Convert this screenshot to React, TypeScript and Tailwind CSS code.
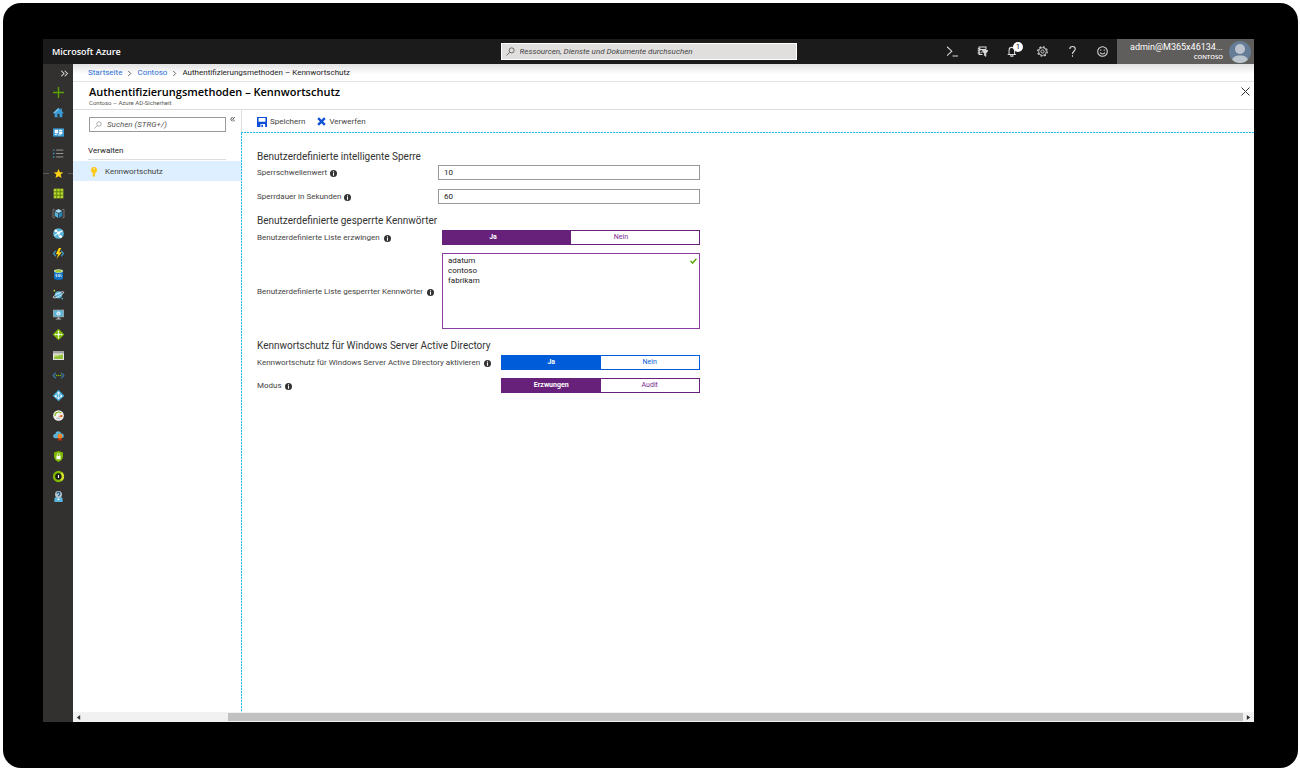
import React, { useState } from "react";

const sideIcons: { name: string; art: React.ReactNode }[][] = [
  [
    { name: "Menü erweitern", art: <path d="M9 4l4 4-4 4M14 4l4 4-4 4" fill="none" stroke="#ddd" strokeWidth="1.500" transform="translate(3 0)" /> },
    { name: "Ressource erstellen", art: <path d="M8 0v16M0 8h16" stroke="#57a300" strokeWidth="2" /> },
    {
      name: "Startseite",
      art: (
        <>
          <path d="M8 1L0 9h2.500v6h11V9H16L13 6V2h-2v2z" fill="#3a9bd6" />
          <path d="M8 1L0 9h2.500L8 4z" fill="#7cc7ee" />
          <path d="M6.500 10h3v5h-3z" fill="#33312f" />
        </>
      ),
    },
    {
      name: "Dashboard",
      art: (
        <>
          <path d="M0 2h16v12H0z" fill="#3999d4" />
          <path d="M2.500 4h5v5h-5zM9 4h4.500v2H9zM9 7h4.500v3H9zM2.500 10h3v1.500h-3zM7 11h5v1H7z" fill="#fff" />
        </>
      ),
    },
  ],
  [
    {
      name: "Alle Dienste",
      art: (
        <>
          <path d="M0 3h2M0 8h2M0 13h2" stroke="#3999c6" strokeWidth="2" />
          <path d="M4.500 3H15M4.500 8H15M4.500 13H15" stroke="#a0a1a2" strokeWidth="1.300" />
        </>
      ),
    },
    { name: "Favoriten", art: <path d="M8 1.500l2 4.500 5 .4-3.800 3.200 1.200 4.900L8 11.900 3.600 14.500l1.200-4.900L1 6.400 6 6z" fill="#fcd116" /> },
    {
      name: "Alle Ressourcen",
      art: (
        <>
          <path d="M1 1h14v14H1z" fill="#b8d432" />
          <path d="M5.500 1v14M10.500 1v14M1 5.500h14M1 10.500h14" stroke="#4d7a05" strokeWidth="1.200" />
        </>
      ),
    },
    {
      name: "Ressourcengruppen",
      art: (
        <>
          <path d="M2.500 2H0v12h2.500M13.500 2H16v12h-2.500" fill="none" stroke="#7a7a7a" strokeWidth="1.400" />
          <path d="M8 1.500l5.500 2.800L8 7.200 2.500 4.300z" fill="#a5dbf5" />
          <path d="M2.500 5.300l5 2.600v6.600l-5-2.800z" fill="#59b4d9" />
          <path d="M13.500 5.300l-5 2.600v6.600l5-2.800z" fill="#2a83b8" />
        </>
      ),
    },
    {
      name: "App Services",
      art: (
        <>
          <circle cx="8" cy="8" r="7.800" fill="#59b4d9" />
          <path d="M3 3l5 4 6-3M8 7l1 5 4 1M8 7L2 11" fill="none" stroke="#fff" strokeWidth="1.500" />
          <circle cx="4" cy="4" r="2" fill="#fff" />
          <circle cx="8.500" cy="7" r="2" fill="#fff" />
          <circle cx="11" cy="12.500" r="2" fill="#fff" />
        </>
      ),
    },
    {
      name: "Funktions-App",
      art: (
        <>
          <path d="M4 4L0.800 8 4 12M12 4l3.200 4L12 12" fill="none" stroke="#3999c6" strokeWidth="1.800" />
          <path d="M8.500 0L4 9h3.500L5 16l8-10H9l3-6z" fill="#fcd116" />
        </>
      ),
    },
  ],
  [
    {
      name: "SQL-Datenbanken",
      art: (
        <>
          <path d="M1.500 3v10c0 1.500 2.900 2.900 6.500 2.900s6.500-1.400 6.500-2.900V3z" fill="#0f72c6" />
          <ellipse cx="8" cy="2.800" rx="6.500" ry="2.600" fill="#e6efc0" />
          <ellipse cx="8" cy="3.100" rx="4.800" ry="1.700" fill="#9fc92c" />
          <path d="M6 8H4v1.500h2V11H4M8 8h1.800v3H8zM11.500 7.500V11h1.500" fill="none" stroke="#fff" strokeWidth="0.900" />
        </>
      ),
    },
    {
      name: "Azure Cosmos DB",
      art: (
        <>
          <circle cx="8" cy="8.500" r="5.300" fill="#59b4d9" />
          <path d="M4 8c2-2 4 0 6-2" stroke="#b7e0f3" fill="none" strokeWidth="1.500" />
          <ellipse cx="8" cy="8.500" rx="8.500" ry="2.300" fill="none" stroke="#d8e4ea" strokeWidth="1.200" transform="rotate(-28 8 8.500)" />
          <circle cx="2" cy="2.500" r="1.300" fill="#b8d432" />
          <circle cx="13.500" cy="14" r="1.100" fill="#59b4d9" />
        </>
      ),
    },
    {
      name: "Virtuelle Computer",
      art: (
        <>
          <path d="M0 1h16v11H0z" fill="#a0a1a2" />
          <path d="M1.200 2.200h13.600v8.600H1.200z" fill="#59b4d9" />
          <path d="M6.500 12h3v2h2.500v1.200H4V14h2.500z" fill="#b9babb" />
          <path d="M8 3.300l3 1.600v3.200l-3 1.600-3-1.600V4.900z" fill="#e5f4fb" />
          <path d="M5 5l3 1.500L11 5M8 6.500v3" stroke="#59b4d9" strokeWidth=".7" fill="none" />
        </>
      ),
    },
    {
      name: "Lastenausgleichsmodule",
      art: (
        <>
          <path d="M8-.5L16.500 8 8 16.500-.5 8z" fill="#7fba00" />
          <path d="M8 3v10M3 8h10" stroke="#fff" strokeWidth="1.100" />
          <path d="M8 2L9.600 4H6.400zM8 14l-1.600-2h3.200zM2 8l2-1.600v3.200zM14 8l-2 1.600V6.400z" fill="#fff" />
          <circle cx="8" cy="8" r="1.800" fill="#fff" />
        </>
      ),
    },
  ],
  [
    {
      name: "Speicherkonten",
      art: (
        <>
          <path d="M0 1.500h16v13H0z" fill="#e7e7e7" />
          <path d="M0 1.500h16V5H0z" fill="#a0a1a2" />
          <path d="M1.500 6.500h13V13h-13z" fill="#c9dc85" />
          <path d="M1.500 10l13-3.500V13h-13z" fill="#92c03c" />
        </>
      ),
    },
    {
      name: "Virtuelle Netzwerke",
      art: (
        <>
          <path d="M4 4L.3 8 4 12M12 4l3.700 4L12 12" fill="none" stroke="#3579a8" strokeWidth="1.800" />
          <circle cx="5" cy="8" r="1.200" fill="#7fba00" />
          <circle cx="8" cy="8" r="1.200" fill="#7fba00" />
          <circle cx="11" cy="8" r="1.200" fill="#7fba00" />
        </>
      ),
    },
    {
      name: "Azure Active Directory",
      art: (
        <>
          <path d="M8-.5l8.500 9L8 16.500-.5 8.500z" fill="#48add9" />
          <path d="M8 4v8M8 4L3.500 9M8 4l4.500 5M3.500 9L8 12l4.500-3" stroke="#d3effa" fill="none" />
          <circle cx="8" cy="4" r="1.500" fill="#fff" />
          <circle cx="4" cy="9" r="1.400" fill="#fff" />
          <circle cx="12" cy="9" r="1.400" fill="#fff" />
          <circle cx="8" cy="12" r="1.500" fill="#fff" />
        </>
      ),
    },
    {
      name: "Überwachen",
      art: (
        <>
          <circle cx="8" cy="8" r="7.800" fill="#f1f1f1" />
          <path d="M3 9a5 5 0 018.500-4.500" fill="none" stroke="#7fba00" strokeWidth="1.600" />
          <path d="M7.500 9l6-2v3.500z" fill="#e8590c" />
          <path d="M5 12h6" stroke="#8a8a8a" />
        </>
      ),
    },
    {
      name: "Advisor",
      art: (
        <>
          <path d="M3 12a3 3 0 01.2-6A4.500 4.500 0 0112 5a3.500 3.500 0 01.500 7z" fill="#59b4d9" />
          <path d="M8 10l-1 6 3-1.500L13 16l-1-6z" fill="#c3340b" />
          <circle cx="10" cy="9" r="3.400" fill="#f58220" />
        </>
      ),
    },
  ],
  [
    {
      name: "Security Center",
      art: (
        <>
          <path d="M8 0l6.500 2v6c0 4-3.500 6.500-6.500 8-3-1.500-6.500-4-6.500-8V2z" fill="#7fba00" />
          <path d="M5 7h6v5H5z" fill="#fff" />
          <path d="M6.200 7V5.500a1.800 1.800 0 013.600 0V7" fill="none" stroke="#fff" />
        </>
      ),
    },
    {
      name: "Kostenverwaltung",
      art: (
        <>
          <circle cx="8" cy="8" r="6.500" fill="#1c1c1c" stroke="#7fba00" strokeWidth="3.400" />
          <path d="M12 2.900A6.500 6.500 0 0111.500 13.500" fill="none" stroke="#d5dd2c" strokeWidth="3.400" />
          <path d="M8 5.800v4.400" stroke="#fff" strokeWidth="1.600" />
        </>
      ),
    },
    {
      name: "Hilfe und Support",
      art: (
        <>
          <path d="M2 16v-4.500c0-2 2-3 6-3s6 1 6 3V16z" fill="#59b4d9" />
          <circle cx="8" cy="5" r="5" fill="#b9c4cc" />
          <path d="M6 4a2 2 0 113.300 1.400C8.500 6 8 6.500 8 7.500" fill="none" stroke="#1d5f8f" strokeWidth="1.800" />
          <path d="M8 10l-2 3h4z" fill="#fff" />
        </>
      ),
    },
  ],
];

function Magnifier({ className }: { className: string }) {
  return (
    <svg viewBox="0 0 16 16" className={className} fill="none" stroke="currentColor" strokeWidth="1.300">
      <circle cx="10" cy="6" r="4.500" />
      <path d="M6.500 9.500L1 15" />
    </svg>
  );
}

function Info() {
  return (
    <svg viewBox="0 0 16 16" className="mt-px size-[7px] shrink-0">
      <circle cx="8" cy="8" r="8" fill="#333" />
      <path d="M8 3v2.500M8 7v6" stroke="#fff" strokeWidth="2.400" />
    </svg>
  );
}

const topIcons = [
  { name: "Cloud Shell", art: <path d="M0 1l7 6.500L0 14M8 14.500h8" strokeWidth="1.500" /> },
  {
    name: "Verzeichnis und Abonnement",
    art: (
      <>
        <path d="M13 5V1.500H3v11h5M1 4h4M1 7h4M1 10h4M3 5h10M6 9h2" strokeWidth="1.500" />
        <path d="M7.500 6.500H16l-3.200 4V15l-2-1.500v-3z" fill="#ddd" />
      </>
    ),
  },
  { name: "Benachrichtigungen", art: <path d="M1 12.500h12M3 12.500V6a4 4 0 018 0v6.500M5.500 13v2h3v-2" strokeWidth="1.500" />, badge: "1" },
  {
    name: "Einstellungen",
    art: (
      <>
        <circle cx="8" cy="8" r="2.300" />
        <circle cx="8" cy="8" r="5.700" />
        <circle cx="8" cy="8" r="7" strokeWidth="1.600" strokeDasharray="2.750 2.750" />
      </>
    ),
  },
  { name: "Hilfe", art: <path d="M4 4.500C4 2 5.800.8 8 .8s4 1.300 4 3.500C12 7.500 8 7.800 8 11.500M8 13.500v2" strokeWidth="1.600" /> },
  {
    name: "Feedback",
    art: (
      <>
        <circle cx="8" cy="8" r="7" strokeWidth="1.500" />
        <path d="M4.500 9.500c1.500 3 5.500 3 7 0M5.500 5v2M10.500 5v2" strokeWidth="1.500" />
      </>
    ),
  },
];

type ToggleProps = {
  label: string;
  options: string[];
  tone?: "purple" | "blue";
  className: string;
  optionClassName?: string;
};

function Toggle({ label, options, tone = "purple", className, optionClassName = "" }: ToggleProps) {
  const [selected, setSelected] = useState(0);
  const frame = tone === "blue" ? "border-[#015cda]" : "border-[#68217a]";
  const on = tone === "blue" ? "bg-[#015cda] text-white font-bold" : "bg-[#68217a] text-white font-bold";
  const off = tone === "blue" ? "bg-white text-[#015cda]" : "bg-white text-[#7b2c8f]";
  return (
    <div role="group" aria-label={label} className={`grid h-[15px] shrink-0 grid-cols-2 border ${frame} ${className}`}>
      {options.map((option, i) => (
        <button
          key={option}
          type="button"
          aria-pressed={selected === i}
          onClick={() => setSelected(i)}
          className={`text-[7px] leading-[13px] ${optionClassName} ${selected === i ? on : off}`}
        >
          {option}
        </button>
      ))}
    </div>
  );
}

function Heading({ children }: { children: React.ReactNode }) {
  return <h2 className="text-[10px] leading-4 text-[#333]">{children}</h2>;
}

function Header() {
  return (
    <header className="grid h-[25px] grid-cols-[1fr_auto_1fr] items-center bg-[#1b1b1b] text-white">
      <span className="pl-[9px] font-['Open_Sans',sans-serif] text-[9px] font-semibold">Microsoft Azure</span>
      <label className="flex h-[17px] w-[296px] items-center gap-[5px] border border-white bg-[#e0dfde] px-1 text-[#444]">
        <Magnifier className="size-[9px]" />
        <input
          type="search"
          aria-label="Ressourcen durchsuchen"
          placeholder="Ressourcen, Dienste und Dokumente durchsuchen"
          className="min-w-0 flex-1 bg-transparent text-[8px] italic outline-none placeholder:text-[#444]"
        />
      </label>
      <div className="flex h-full items-center justify-end">
        {topIcons.map((icon) => (
          <button key={icon.name} type="button" aria-label={icon.name} className="relative flex h-full w-[30px] items-center justify-center">
            <svg viewBox="0 0 16 16" className="size-[11px]" fill="none" stroke="#ddd" strokeWidth="1.300">
              {icon.art}
            </svg>
            {icon.badge && (
              <span className="absolute top-[3px] right-1 flex size-[10px] items-center justify-center rounded-full bg-white text-[7px] leading-none text-black">
                {icon.badge}
              </span>
            )}
          </button>
        ))}
        <button type="button" className="flex h-full w-[137px] items-center justify-end gap-[6px] bg-[#605e5c] pr-[3px]">
          <span className="flex flex-col pt-px text-right">
            <span className="text-[9px] leading-[10px]">admin@M365x46134...</span>
            <span className="font-['Open_Sans',sans-serif] text-[6px] leading-[10px] font-semibold">CONTOSO</span>
          </span>
          <svg viewBox="0 0 22 22" className="size-[22px]">
            <clipPath id="avatar">
              <circle cx="11" cy="11" r="11" />
            </clipPath>
            <g clipPath="url(#avatar)">
              <path d="M0 0h22v22H0z" fill="#647c95" />
              <circle cx="11" cy="8" r="5" fill="#bcc5ce" />
              <path d="M2.500 22c0-6 4-7.500 8.500-7.500s8.500 1.500 8.500 7.500z" fill="#bcc5ce" />
            </g>
          </svg>
        </button>
      </div>
    </header>
  );
}

function Sidebar() {
  return (
    <nav aria-label="Favoriten" className="flex w-[30px] shrink-0 flex-col gap-px bg-[#33312f]">
      {sideIcons.map((group, g) => (
        <div key={g} className="flex flex-col">
          {group.map((icon, i) => (
            <button
              key={icon.name}
              type="button"
              aria-label={icon.name}
              className={`flex w-full items-center justify-center ${g === 0 && i === 0 ? "h-[18px]" : "h-5"}`}
            >
              {icon.name === "Favoriten" && <span className="h-px flex-1 bg-[#5c5a58]" />}
              <svg viewBox="0 0 16 16" className="mx-1 size-[11px] overflow-visible">
                {icon.art}
              </svg>
              {icon.name === "Favoriten" && <span className="h-px flex-1 bg-[#5c5a58]" />}
            </button>
          ))}
        </div>
      ))}
    </nav>
  );
}

function SideMenu() {
  return (
    <aside className="w-[168px] shrink-0">
      <div className="flex items-start gap-1 pt-[7px] pl-4">
        <label className="flex h-[15px] w-[137px] items-center gap-[5px] border border-[#999] px-1 text-[#555]">
          <Magnifier className="size-2 opacity-70" />
          <input
            type="search"
            aria-label="Suchen"
            placeholder="Suchen (STRG+/)"
            className="min-w-0 flex-1 bg-transparent text-[8px] italic outline-none placeholder:text-[#555]"
          />
        </label>
        <button type="button" aria-label="Menü einklappen">
          <svg viewBox="0 0 8 8" className="size-[5px]" fill="none" stroke="#333" strokeWidth="1.400">
            <path d="M4 0L1 3.500 4 7M7.500 0l-3 3.500 3 3.500" />
          </svg>
        </button>
      </div>
      <h2 className="mt-[11px] mr-[15px] mb-px ml-[15px] border-b border-[#ddd] text-[8px] leading-4 text-[#222]">Verwalten</h2>
      <a href="#kennwortschutz" className="flex h-5 items-center gap-[7px] bg-[#def0ff] pt-px pl-[17px] text-[8px] text-[#444]">
        <svg viewBox="0 0 16 20" className="h-[10px] w-2" fill="#fcc812">
          <path d="M8 0a6 6 0 00-2.500 11.500V18L8 20l2.500-2.500-1.500-2 1.500-1.500v-2.500A6 6 0 008 0zm0 2.200a1.500 1.500 0 110 3 1.500 1.500 0 010-3z" fillRule="evenodd" />
        </svg>
        Kennwortschutz
      </a>
    </aside>
  );
}

function SettingsForm() {
  return (
    <form className="flex max-w-[458px] flex-col pt-4 pl-[15px] text-[8px] whitespace-nowrap text-[#444]">
      <Heading>Benutzerdefinierte intelligente Sperre</Heading>
      <div className="flex h-[15px] items-center justify-between">
        <label htmlFor="threshold" className="flex items-center gap-[3px] pt-px">
          Sperrschwellenwert <Info />
        </label>
        <input id="threshold" defaultValue="10" className="h-[15px] w-[262px] border border-[#999] px-[5px] text-[8px] text-[#222]" />
      </div>
      <div className="mt-[9px] flex h-[15px] items-center justify-between">
        <label htmlFor="duration" className="flex items-center gap-[3px] pt-px">
          Sperrdauer in Sekunden <Info />
        </label>
        <input id="duration" defaultValue="60" className="h-[15px] w-[262px] border border-[#999] px-[5px] text-[8px] text-[#222]" />
      </div>

      <div className="mt-[9px]">
        <Heading>Benutzerdefinierte gesperrte Kennwörter</Heading>
      </div>
      <div className="flex h-4 items-center justify-between">
        <span className="flex items-center gap-1 pt-px">
          Benutzerdefinierte Liste erzwingen <Info />
        </span>
        <Toggle label="Benutzerdefinierte Liste erzwingen" options={["Ja", "Nein"]} className="w-[258px]" optionClassName="pr-7" />
      </div>
      <div className="mt-2 flex items-center justify-between">
        <label htmlFor="banned" className="flex items-center gap-1 pt-px">
          Benutzerdefinierte Liste gesperrter Kennwörter <Info />
        </label>
        <div className="relative flex">
          <textarea
            id="banned"
            defaultValue={"adatum\ncontoso\nfabrikam"}
            className="h-[76px] w-[258px] resize-none border border-[#8b3fa0] px-[5px] py-0.5 text-[8px] leading-[10px] text-[#222] outline-none"
          />
          <svg viewBox="0 0 12 10" className="absolute top-[5px] right-[3px] h-[6px] w-[7px]" fill="none" stroke="#57a300" strokeWidth="2.400">
            <path d="M1 5l3.500 3.500L11 1" />
          </svg>
        </div>
      </div>

      <div className="mt-[9px]">
        <Heading>Kennwortschutz für Windows Server Active Directory</Heading>
      </div>
      <div className="flex h-4 items-center justify-between">
        <span className="flex items-center gap-1 pt-px">
          Kennwortschutz für Windows Server Active Directory aktivieren <Info />
        </span>
        <Toggle label="Kennwortschutz aktivieren" options={["Ja", "Nein"]} tone="blue" className="w-[199px]" />
      </div>
      <div className="mt-[7px] flex h-4 items-center justify-between">
        <span className="flex items-center gap-[3px] pt-px">
          Modus <Info />
        </span>
        <Toggle label="Modus" options={["Erzwungen", "Audit"]} className="w-[199px]" />
      </div>
    </form>
  );
}

function Chevron() {
  return (
    <svg viewBox="0 0 8 8" className="size-[5px]" fill="none" stroke="#444" strokeWidth="1.300">
      <path d="M2 0l4 4-4 4" />
    </svg>
  );
}

export default function App() {
  return (
    <div className="flex min-h-screen bg-white py-[3px] pr-0.5 pl-[3px] font-[Roboto,'Open_Sans',sans-serif]">
      <div className="flex flex-1 flex-col rounded-[18px] bg-black pt-9 pr-11 pb-[46px] pl-10">
        <Header />
        <div className="flex flex-1">
          <Sidebar />
          <main className="flex min-w-0 flex-1 flex-col bg-white">
            <nav aria-label="Brotkrümel" className="flex h-[18px] items-center gap-[5px] border-b border-[#e3e3e3] bg-linear-to-b from-[#e2e2e2] to-white to-60% pt-px pl-[15px] text-[8px] text-[#222]">
              <a href="#start" className="text-[#2a6fd6]">Startseite</a>
              <Chevron />
              <a href="#contoso" className="text-[#2a6fd6]">Contoso</a>
              <Chevron />
              <span>Authentifizierungsmethoden – Kennwortschutz</span>
            </nav>
            <div className="flex h-7 items-start justify-between border-b border-[#ddd] pt-0.5 pr-1 pl-4">
              <div>
                <h1 className="font-['Open_Sans',sans-serif] text-[11px] leading-[15px] font-semibold text-black">Authentifizierungsmethoden – Kennwortschutz</h1>
                <p className="text-[6px] leading-2 text-[#555]">Contoso – Azure AD-Sicherheit</p>
              </div>
              <button type="button" aria-label="Schließen" className="mt-[3px]">
                <svg viewBox="0 0 9 9" className="size-[9px]" fill="none" stroke="#333">
                  <path d="M.5.5l8 8M8.500.5l-8 8" />
                </svg>
              </button>
            </div>
            <div className="flex flex-1">
              <SideMenu />
              <section className="flex min-w-0 flex-1 flex-col">
                <div className="flex h-[22px] items-center gap-3 border-l border-[#ddd] pt-px pl-[15px] text-[8px] text-[#444]">
                  <button type="button" className="flex items-center gap-[3px]">
                    <svg viewBox="0 0 16 16" className="size-[10px]" fill="#0f4fd6">
                      <path d="M0 0h16v16h-3v-5H5.500v5H0zM2.500 1.500v6h11v-6zM7 12.500h2.500V16H7z" fillRule="evenodd" />
                    </svg>
                    Speichern
                  </button>
                  <button type="button" className="flex items-center gap-[3px]">
                    <svg viewBox="0 0 16 16" className="size-[9px]" stroke="#0f4fd6" strokeWidth="4">
                      <path d="M2 2l12 12M14 2L2 14" />
                    </svg>
                    Verwerfen
                  </button>
                </div>
                <div className="h-px bg-[repeating-linear-gradient(90deg,#27bdec_0_2px,#c9effb_2px_3px)]" />
                <div className="flex flex-1">
                  <div className="w-px bg-[repeating-linear-gradient(180deg,#27bdec_0_2px,#c9effb_2px_3px)]" />
                  <div className="min-w-0 flex-1">
                    <SettingsForm />
                  </div>
                </div>
              </section>
            </div>
            <div className="flex h-[10px] items-center bg-[#f1f1f1]">
              <button type="button" aria-label="Nach links" className="flex w-[10px] justify-center">
                <svg viewBox="0 0 6 6" className="size-[5px]"><path d="M5 0v6L1 3z" fill="#333" /></svg>
              </button>
              <div className="flex h-2 flex-1 justify-end">
                <div className="w-7/8 bg-[#c1c1c1]" />
              </div>
              <button type="button" aria-label="Nach rechts" className="flex w-[11px] justify-center">
                <svg viewBox="0 0 6 6" className="size-[5px]"><path d="M1 0v6l4-3z" fill="#333" /></svg>
              </button>
            </div>
          </main>
        </div>
      </div>
    </div>
  );
}
